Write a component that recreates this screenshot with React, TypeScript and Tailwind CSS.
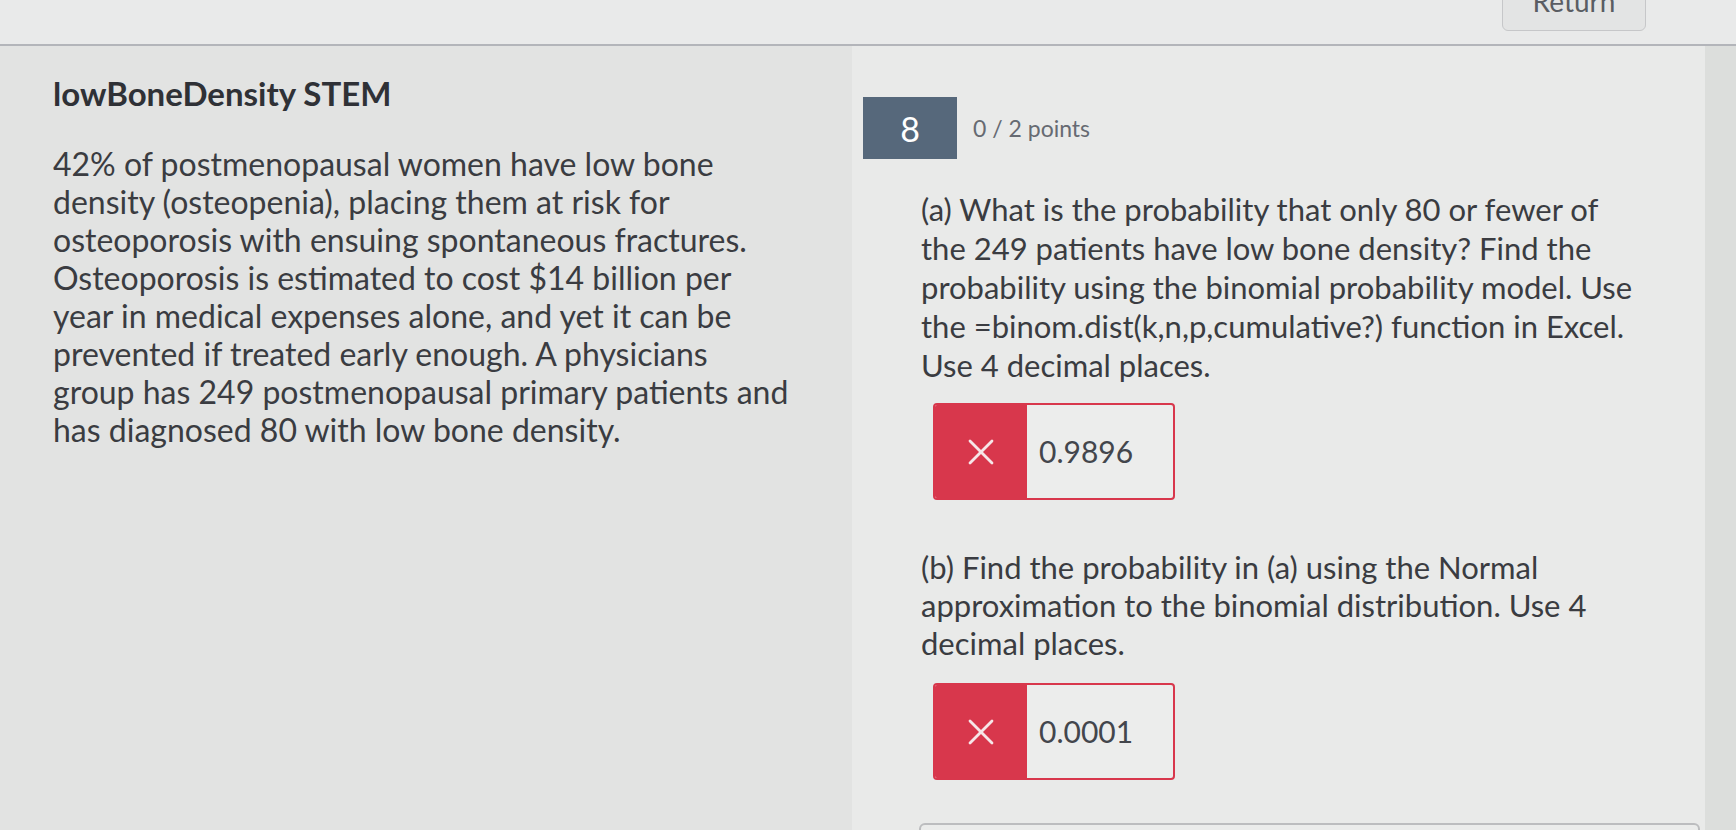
import { X } from "lucide-react";

const font = { fontFamily: "Lato, 'Open Sans', sans-serif" };

function AnswerBox({ value }: { value: string }) {
  return (
    <div className="flex h-[97px] w-[242px] overflow-hidden rounded-[4px] border-2 border-[#d8374c] bg-[#ecedec]">
      <div className="flex w-[92px] items-center justify-center bg-[#d8374c]">
        <X size={44} strokeWidth={1.5} className="text-[#f6e6e8]" />
      </div>
      <div className="flex items-center pl-[12px] text-[30px] text-[#43464c]">{value}</div>
    </div>
  );
}

export default function App() {
  return (
    <div className="h-[830px] w-[1736px] overflow-hidden bg-[#e6e7e6] text-[#3a3c41]" style={font}>
      <div className="flex h-[46px] justify-end border-b-2 border-[#b3b5ba] bg-[#e9eaea] pr-[90px]">
        <div className="-mt-[29px] flex h-[60px] w-[144px] items-center justify-center rounded-md border border-[#c6c7c9] bg-[#e3e4e4] text-[28px] text-[#5a5d63]">
          Return
        </div>
      </div>

      <div className="flex h-[784px]">
        <div className="w-[852px] bg-[#e2e3e2] pl-[53px] pt-[28px]">
          <h1 className="text-[33px] font-bold leading-[38px] text-[#2f3136]">lowBoneDensity STEM</h1>
          <p className="mt-[33px] text-[32px] leading-[38px]">
            42% of postmenopausal women have low bone
            <br />
            density (osteopenia), placing them at risk for
            <br />
            osteoporosis with ensuing spontaneous fractures.
            <br />
            Osteoporosis is estimated to cost $14 billion per
            <br />
            year in medical expenses alone, and yet it can be
            <br />
            prevented if treated early enough. A physicians
            <br />
            group has 249 postmenopausal primary patients and
            <br />
            has diagnosed 80 with low bone density.
          </p>
        </div>

        <div className="w-[853px] bg-[#e9eae9] pl-[11px] pt-[51px]">
          <div className="flex items-center">
            <div className="flex h-[62px] w-[94px] items-center justify-center bg-[#56687b] text-[34px] text-white">
              8
            </div>
            <span className="ml-[16px] text-[23px] text-[#666a72]">0 / 2 points</span>
          </div>

          <div className="pl-[58px]">
            <p className="mt-[31px] text-[31px] leading-[39px]">
              (a) What is the probability that only 80 or fewer of
              <br />
              the 249 patients have low bone density? Find the
              <br />
              probability using the binomial probability model. Use
              <br />
              the =binom.dist(k,n,p,cumulative?) function in Excel.
              <br />
              Use 4 decimal places.
            </p>
            <div className="ml-[12px] mt-[18px]">
              <AnswerBox value="0.9896" />
            </div>

            <p className="mt-[48px] text-[31px] leading-[38px]">
              (b) Find the probability in (a) using the Normal
              <br />
              approximation to the binomial distribution. Use 4
              <br />
              decimal places.
            </p>
            <div className="ml-[12px] mt-[21px]">
              <AnswerBox value="0.0001" />
            </div>

            <div className="-ml-[2px] mt-[43px] h-[60px] w-[781px] rounded-md border-2 border-[#bcbdbf] bg-[#ebeceb]" />
          </div>
        </div>

        <div className="flex-1 bg-[#dcdedc]" />
      </div>
    </div>
  );
}
